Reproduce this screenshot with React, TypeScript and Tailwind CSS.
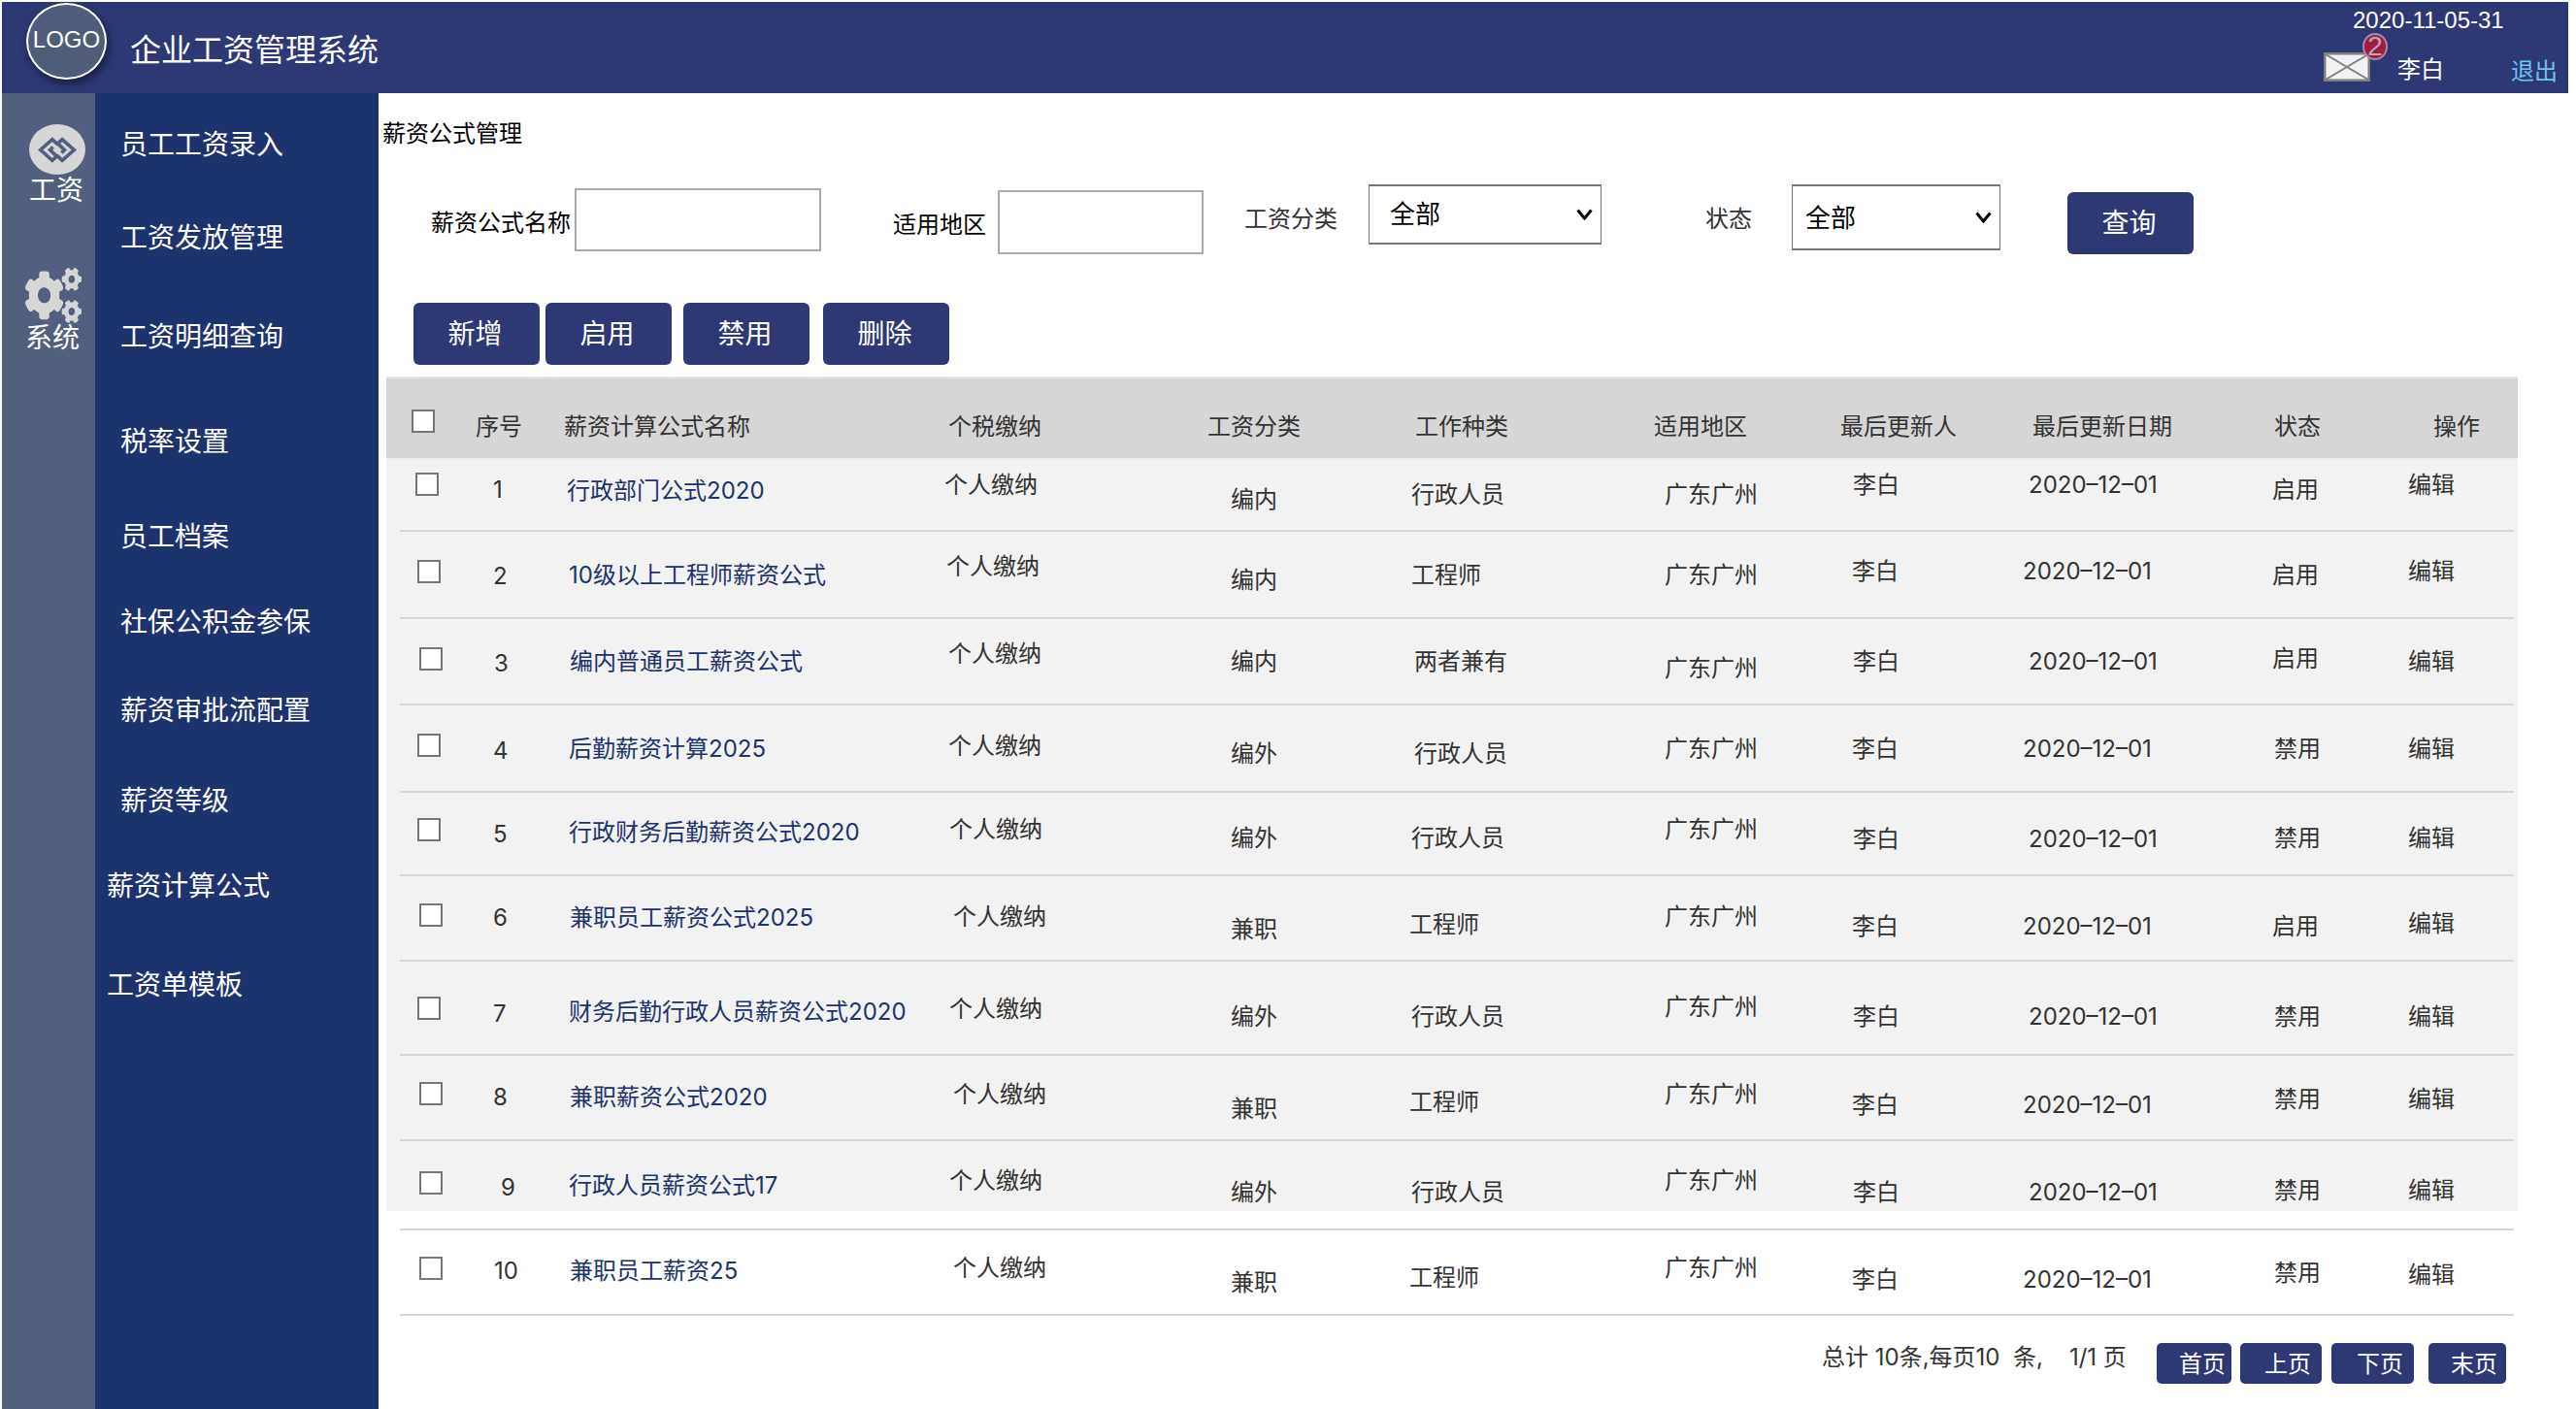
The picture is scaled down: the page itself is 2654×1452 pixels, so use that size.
import React from "react";
import { FaCogs } from "react-icons/fa";

const S = 1.6926;
const colStarts = [398, 480, 570, 960, 1260, 1440, 1700, 1890, 2070, 2330, 2470, 2594];

type Row = { n: string; name: string; cat: string; job: string; st: string; xs: number[]; ys: number[]; top: number; h: number };

const rows: Row[] = [
  { n: "1", name: "行政部门公式2020", cat: "编内", job: "行政人员", st: "启用", top: 474, h: 72, xs: [253, 300, 345, 575, 749, 859, 1013, 1128, 1235, 1383, 1466], ys: [295, 297, 298, 294, 303, 300, 300, 294, 294, 297, 294] },
  { n: "2", name: "10级以上工程师薪资公式", cat: "编内", job: "工程师", st: "启用", top: 548, h: 88, xs: [254, 300, 346, 576, 749, 859, 1013, 1127, 1231, 1383, 1466], ys: [348, 350, 349, 344, 352, 349, 349, 347, 347, 349, 347] },
  { n: "3", name: "编内普通员工薪资公式", cat: "编内", job: "两者兼有", st: "启用", top: 638, h: 87, xs: [255, 301, 347, 577, 749, 861, 1013, 1128, 1235, 1383, 1466], ys: [401, 403, 402, 397, 402, 402, 406, 402, 402, 400, 402] },
  { n: "4", name: "后勤薪资计算2025", cat: "编外", job: "行政人员", st: "禁用", top: 727, h: 88, xs: [254, 300, 346, 577, 749, 861, 1013, 1127, 1231, 1384, 1466], ys: [454, 456, 455, 453, 458, 458, 455, 455, 455, 455, 455] },
  { n: "5", name: "行政财务后勤薪资公式2020", cat: "编外", job: "行政人员", st: "禁用", top: 817, h: 84, xs: [254, 300, 346, 578, 749, 859, 1013, 1128, 1235, 1384, 1466], ys: [505, 507, 506, 504, 509, 509, 504, 510, 510, 509, 509] },
  { n: "6", name: "兼职员工薪资公式2025", cat: "兼职", job: "工程师", st: "启用", top: 903, h: 86, xs: [255, 300, 347, 580, 749, 858, 1013, 1127, 1231, 1383, 1466], ys: [557, 558, 558, 557, 565, 562, 557, 563, 563, 563, 561] },
  { n: "7", name: "财务后勤行政人员薪资公式2020", cat: "编外", job: "行政人员", st: "禁用", top: 991, h: 95, xs: [254, 300, 346, 578, 749, 859, 1013, 1128, 1235, 1384, 1466], ys: [614, 616, 615, 613, 618, 618, 612, 618, 618, 618, 618] },
  { n: "8", name: "兼职薪资公式2020", cat: "兼职", job: "工程师", st: "禁用", top: 1088, h: 86, xs: [255, 300, 347, 580, 749, 858, 1013, 1127, 1231, 1384, 1466], ys: [666, 667, 667, 665, 674, 670, 665, 672, 672, 668, 668] },
  { n: "9", name: "行政人员薪资公式17", cat: "编外", job: "行政人员", st: "禁用", top: 1176, h: 72, xs: [255, 305, 346, 578, 749, 859, 1013, 1128, 1235, 1384, 1466], ys: [720, 722, 721, 718, 725, 725, 718, 725, 725, 724, 724] },
  { n: "10", name: "兼职员工薪资25", cat: "兼职", job: "工程师", st: "禁用", top: 1268, h: 86, xs: [255, 301, 347, 580, 749, 858, 1013, 1127, 1231, 1384, 1466], ys: [772, 773, 773, 771, 780, 777, 771, 778, 778, 774, 775] },
];

const navItems = [
  { t: "员工工资录入", c: "mt-[31px] pl-[26px]" },
  { t: "工资发放管理", c: "mt-[56px] pl-[26px]" },
  { t: "工资明细查询", c: "mt-[62px] pl-[26px]" },
  { t: "税率设置", c: "mt-[68px] pl-[26px]" },
  { t: "员工档案", c: "mt-[58px] pl-[26px]" },
  { t: "社保公积金参保", c: "mt-[48px] pl-[26px]" },
  { t: "薪资审批流配置", c: "mt-[51px] pl-[26px]" },
  { t: "薪资等级", c: "mt-[53px] pl-[26px]" },
  { t: "薪资计算公式", c: "mt-[48px] pl-[12px]" },
  { t: "工资单模板", c: "mt-[62px] pl-[12px]" },
];

const headerCols = [
  { t: "序号", c: "w-[90px] ml-[92px]" },
  { t: "薪资计算公式名称", c: "w-[396px] ml-[1px]" },
  { t: "个税缴纳", c: "w-[267px]" },
  { t: "工资分类", c: "w-[214px]" },
  { t: "工作种类", c: "w-[246px]" },
  { t: "适用地区", c: "w-[192px]" },
  { t: "最后更新人", c: "w-[198px]" },
  { t: "最后更新日期", c: "w-[249px]" },
  { t: "状态", c: "w-[164px]" },
  { t: "操作", c: "w-[60px]" },
];

function Box() {
  return <input type="checkbox" className="appearance-none block w-[24px] h-[24px] border-2 border-[#767676] bg-white" />;
}

function Cell({ row, i, children }: { row: Row; i: number; children: React.ReactNode }) {
  const pl = Math.round(row.xs[i] * S) - colStarts[i];
  const pt = Math.round(row.ys[i] * S) - row.top - 18 + (i > 0 ? 2 : 0);
  const w = colStarts[i + 1] - colStarts[i];
  return (
    <div style={{ width: w, paddingLeft: pl, paddingTop: pt }} className="shrink-0">
      <div className="h-[36px] flex items-center whitespace-nowrap">{children}</div>
    </div>
  );
}

function TableRow({ row }: { row: Row }) {
  return (
    <div style={{ height: row.h }} className="flex overflow-hidden text-[24px] leading-[36px] text-[#333333] font-['Inter','Noto_Sans_CJK_SC',sans-serif]">
      <Cell row={row} i={0}><Box /></Cell>
      <Cell row={row} i={1}>{row.n}</Cell>
      <Cell row={row} i={2}><span className="text-[#1e336d]">{row.name}</span></Cell>
      <Cell row={row} i={3}>个人缴纳</Cell>
      <Cell row={row} i={4}>{row.cat}</Cell>
      <Cell row={row} i={5}>{row.job}</Cell>
      <Cell row={row} i={6}>广东广州</Cell>
      <Cell row={row} i={7}>李白</Cell>
      <Cell row={row} i={8}>2020–12–01</Cell>
      <Cell row={row} i={9}>{row.st}</Cell>
      <Cell row={row} i={10}>编辑</Cell>
    </div>
  );
}

function Sep() {
  return <div className="h-[2px] bg-[#d6d6d6] ml-[14px] mr-[4px]" />;
}

function Btn({ t, c }: { t: string; c: string }) {
  return (
    <button className={"w-[130px] h-[64px] pr-[3px] rounded-[6px] bg-[#2e3875] text-white text-[28px] leading-[60px] text-center block self-start " + c}>
      <span className="block h-[64px]">{t}</span>
    </button>
  );
}

function PageBtn({ t, c }: { t: string; c: string }) {
  return (
    <button className={"h-[42px] rounded-[5px] bg-[#2e3875] text-white text-[24px] text-left block " + c}>
      <span className="block h-[42px] leading-[40px]">{t}</span>
    </button>
  );
}

function Select({ c, t, x }: { c: string; t: string; x: string }) {
  return (
    <div className={"relative shrink-0 " + c}>
      <select className={"appearance-none block w-full h-full border border-y-2 border-[#767676] bg-white text-black text-[26px] leading-[36px] " + t}>
        <option>全部</option>
      </select>
      <svg width="17" height="12" viewBox="0 0 17 12" fill="none" stroke="#000000" strokeWidth="3" className={"absolute pointer-events-none " + x}>
        <path d="M1.5 1.5 L8.5 10 L15.5 1.5" />
      </svg>
    </div>
  );
}

export default function App() {
  return (
    <div className="w-[2654px] h-[1452px] overflow-hidden bg-white pt-[2px] pl-[2px] pr-[8px] font-['Noto_Sans_CJK_SC','Liberation_Sans',sans-serif]">
      <header className="h-[94px] bg-[#2e3875] flex items-start text-white">
        <div className="ml-[25px] mt-[1px] w-[83px] h-[79px] pb-[3px] rounded-[50%] border-2 border-white bg-[#4f5d7a] shadow-[2px_4px_8px_rgba(0,0,0,0.5)] flex items-center justify-center font-['Liberation_Sans',sans-serif] text-[24px] leading-none">
          LOGO
        </div>
        <h1 className="ml-[24px] mt-[25px] text-[32px] leading-[44px] font-normal whitespace-nowrap">企业工资管理系统</h1>
        <div className="ml-auto w-[252px] flex flex-col">
          <div className="pl-[30px] mt-[4px] h-[30px] leading-[30px] text-[24px] font-['Liberation_Sans',sans-serif] whitespace-nowrap">2020-11-05-31</div>
          <div className="relative mt-[18px] flex items-start">
            <svg width="48" height="30" viewBox="0 0 48 30" className="shrink-0">
              <rect x="1.25" y="1.25" width="45.5" height="27.5" fill="#f2f2f2" stroke="#7f7f7f" strokeWidth="2.5" />
              <path d="M2 2 L46 28 M46 2 L2 28" stroke="#7f7f7f" strokeWidth="2" fill="none" />
            </svg>
            <span className="ml-[28px] -mt-[2px] w-[49px] text-[24px] leading-[36px] whitespace-nowrap">李白</span>
            <span className="ml-[68px] mt-[0px] text-[24px] leading-[36px] text-[#6cc5ef] whitespace-nowrap">退出</span>
            <div className="absolute left-[40px] top-[-20px] w-[26px] h-[28px] rounded-[50%] bg-[#a51c3c] border-2 border-[#a08aa5] flex items-center justify-center text-[#a9aac5] text-[28px] leading-none font-['Liberation_Sans',sans-serif]">
              2
            </div>
          </div>
        </div>
      </header>

      <div className="flex h-[1356px]">
        <aside className="w-[96px] shrink-0 bg-[#535f7e] flex flex-col text-white text-[28px] leading-[32px]">
          <div className="mt-[32px] ml-[28px] w-[58px] h-[52px] rounded-[50%] bg-[#d6d6d6] flex items-center justify-center">
            <svg width="40" height="27" viewBox="0 0 121 82" fill="none" stroke="#535f7e" strokeWidth="11">
              <path d="M62 24 L45 8 L8 41 L45 74 L59 61 L38 41 L47 32" />
              <path d="M59 58 L76 74 L113 41 L76 8 L62 21 L83 41 L74 50" />
            </svg>
          </div>
          <span className="-mt-[2px] ml-[28px] whitespace-nowrap">工资</span>
          <FaCogs className="mt-[66px] ml-[24px] w-[58px] h-[57px] text-[#d6d6d6]" preserveAspectRatio="none" />
          <span className="-mt-[3px] ml-[24px] whitespace-nowrap">系统</span>
        </aside>

        <nav className="w-[292px] shrink-0 bg-[#1d336e] flex flex-col text-white text-[28px] leading-[40px]">
          {navItems.map((it) => (
            <a key={it.t} className={"block whitespace-nowrap " + it.c}>{it.t}</a>
          ))}
        </nav>

        <main className="flex-1 flex flex-col min-w-0">
          <div className="mt-[23px] ml-[4px] h-[35px] text-[24px] leading-[34px] text-black">薪资公式管理</div>

          <div className="mt-[36px] h-[72px] flex items-start text-[24px] leading-[36px] whitespace-nowrap">
            <label className="mt-[20px] ml-[54px] w-[148px] text-black">薪资公式名称</label>
            <input className="mt-[4px] w-[254px] h-[65px] border-2 border-[#a9a9a9] bg-white" />
            <label className="mt-[22px] ml-[74px] w-[108px] text-black">适用地区</label>
            <input className="mt-[6px] w-[212px] h-[66px] border-2 border-[#a9a9a9] bg-white" />
            <label className="mt-[16px] ml-[42px] w-[96px] text-[#333333]">工资分类</label>
            <Select c="ml-[32px] w-[240px] h-[62px]" t="pl-[21px] pb-[5px]" x="right-[9px] top-[25px]" />
            <label className="mt-[16px] ml-[107px] w-[48px] text-[#333333]">状态</label>
            <Select c="ml-[41px] w-[215px] h-[68px]" t="pl-[13px] pb-[3px]" x="right-[9px] top-[28px]" />
            <Btn t="查询" c="ml-[69px] mt-[8px]" />
          </div>

          <div className="mt-[50px] ml-[36px] flex">
            <Btn t="新增" c="" />
            <Btn t="启用" c="ml-[6px]" />
            <Btn t="禁用" c="ml-[12px]" />
            <Btn t="删除" c="ml-[14px]" />
          </div>

          <div className="mt-[12px] ml-[8px] w-[2196px]">
            <div className="h-[84px] border-t-2 border-[#e4e4e4] bg-[#d6d6d6] relative flex items-start text-[24px] leading-[36px] text-[#333333] whitespace-nowrap">
              <div className="absolute left-[26px] top-[32px]"><Box /></div>
              {headerCols.map((h) => (
                <span key={h.t} className={"mt-[30px] shrink-0 " + h.c}>{h.t}</span>
              ))}
            </div>
            <div className="h-[2px] bg-[#ececec]" />
            <div className="bg-[#f2f2f2]">
              {rows.slice(0, 8).map((r) => (
                <div key={r.n}>
                  <TableRow row={r} />
                  <Sep />
                </div>
              ))}
              <TableRow row={rows[8]} />
            </div>
            <div className="h-[18px]" />
            <Sep />
            <TableRow row={rows[9]} />
            <Sep />
          </div>

          <div className="mt-[28px] ml-[1487px] flex items-start whitespace-nowrap">
            <div className="w-[345px] -mt-[3px] text-[24px] leading-[36px] text-[#333333] whitespace-pre font-['Inter','Noto_Sans_CJK_SC',sans-serif]">总计 10条,每页10  条,    1/1 页</div>
            <PageBtn t="首页" c="w-[77px] pl-[23px]" />
            <PageBtn t="上页" c="w-[84px] pl-[25px] ml-[9px]" />
            <PageBtn t="下页" c="w-[85px] pl-[26px] ml-[10px]" />
            <PageBtn t="末页" c="w-[80px] pl-[23px] ml-[15px]" />
          </div>
        </main>
      </div>
    </div>
  );
}
